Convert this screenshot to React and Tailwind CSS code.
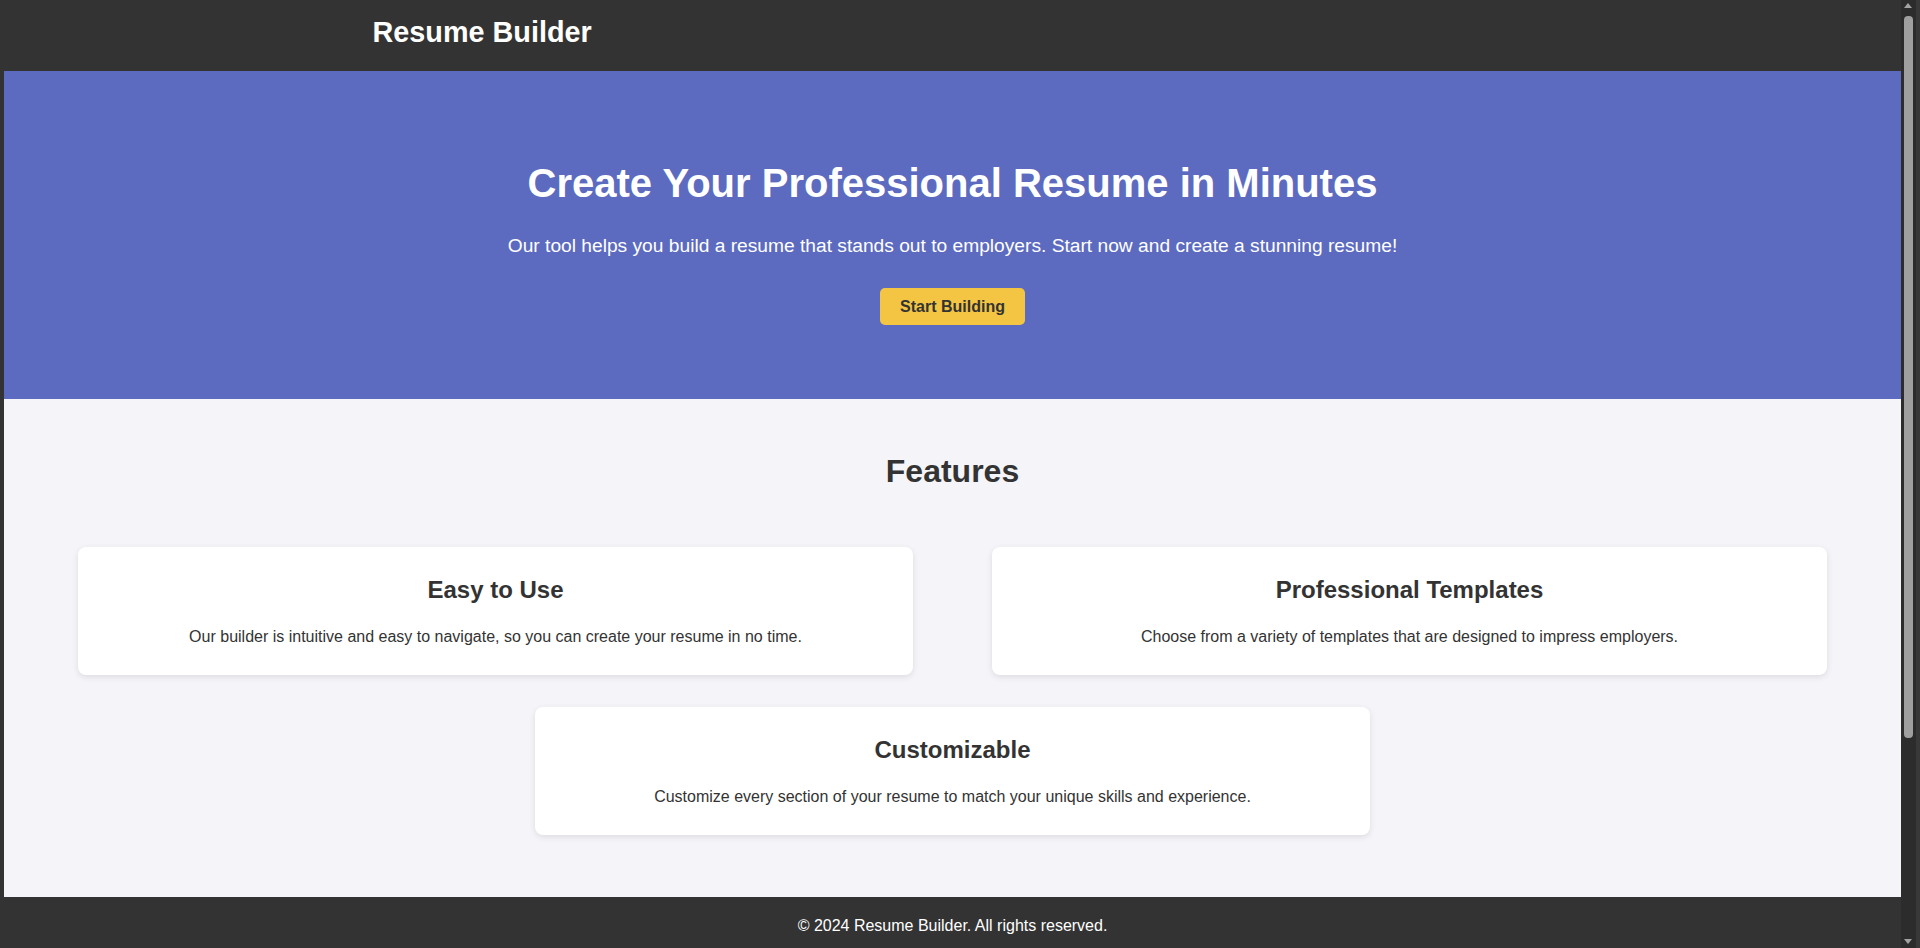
import React from "react";

const features = [
  {
    title: "Easy to Use",
    text: "Our builder is intuitive and easy to navigate, so you can create your resume in no time.",
  },
  {
    title: "Professional Templates",
    text: "Choose from a variety of templates that are designed to impress employers.",
  },
  {
    title: "Customizable",
    text: "Customize every section of your resume to match your unique skills and experience.",
  },
];

const FeatureCard = ({ title, text }) => (
  <div className="h-[128px] w-[835px] rounded-lg bg-white pt-[29px] text-center text-[#333] shadow-[0_2px_6px_rgba(0,0,0,0.1)]">
    <h3 className="text-[24px] font-bold leading-[28px]">{title}</h3>
    <p className="mt-[24px] text-[16px] leading-[18px]">{text}</p>
  </div>
);

const App = () => {
  return (
    <div className="flex h-[948px] w-[1920px] overflow-hidden bg-[#333] font-['Liberation_Sans',Arial,sans-serif]">
      <div className="w-[4px] shrink-0 bg-[#333]" />

      <div className="flex w-[1897px] shrink-0 flex-col bg-[#f4f4f9]">
        <header className="h-[71px] shrink-0 bg-[#333]">
          <div className="mx-auto w-full max-w-[1200px] px-5 pt-[16px]">
            <h1 className="text-[28.8px] font-bold leading-[33px] text-white">Resume Builder</h1>
          </div>
        </header>

        <section className="flex shrink-0 flex-col items-center bg-[#5c6bc0] pt-[89px] pb-[74px] text-center text-white">
          <h2 className="text-[40px] font-bold leading-[46px]">Create Your Professional Resume in Minutes</h2>
          <p className="mt-[29px] text-[19.2px] leading-[22px]">
            Our tool helps you build a resume that stands out to employers. Start now and create a stunning resume!
          </p>
          <button className="mt-[31px] flex h-[37px] items-center rounded-[5px] bg-[#f4c542] px-5 text-[16px] font-bold text-[#333]">
            Start Building
          </button>
        </section>

        <section className="shrink-0 pt-[54px] pb-[62px]">
          <h2 className="text-center text-[32px] font-bold leading-[37px] text-[#333]">Features</h2>
          <div className="mt-[57px] flex flex-wrap justify-center gap-x-[79px] gap-y-[32px]">
            {features.map((f) => (
              <FeatureCard key={f.title} title={f.title} text={f.text} />
            ))}
          </div>
        </section>

        <footer className="flex-1 bg-[#333] pt-[20px] text-center text-[16px] leading-[18px] text-white">
          © 2024 Resume Builder. All rights reserved.
        </footer>
      </div>

      {/* browser scrollbar */}
      <div className="relative w-[15px] shrink-0 bg-[#2c2c2c]">
        <div className="absolute left-[3px] top-[3px] h-0 w-0 border-x-[4.5px] border-b-[5px] border-x-transparent border-b-[#a3a3a3]" />
        <div className="absolute left-[3px] top-[16px] h-[722px] w-[9px] rounded-[4px] bg-[#9f9f9f]" />
        <div className="absolute bottom-[4px] left-[3px] h-0 w-0 border-x-[4.5px] border-t-[5px] border-x-transparent border-t-[#a3a3a3]" />
      </div>
      <div className="w-[4px] shrink-0 bg-[#383838]" />
    </div>
  );
};

export default App;
